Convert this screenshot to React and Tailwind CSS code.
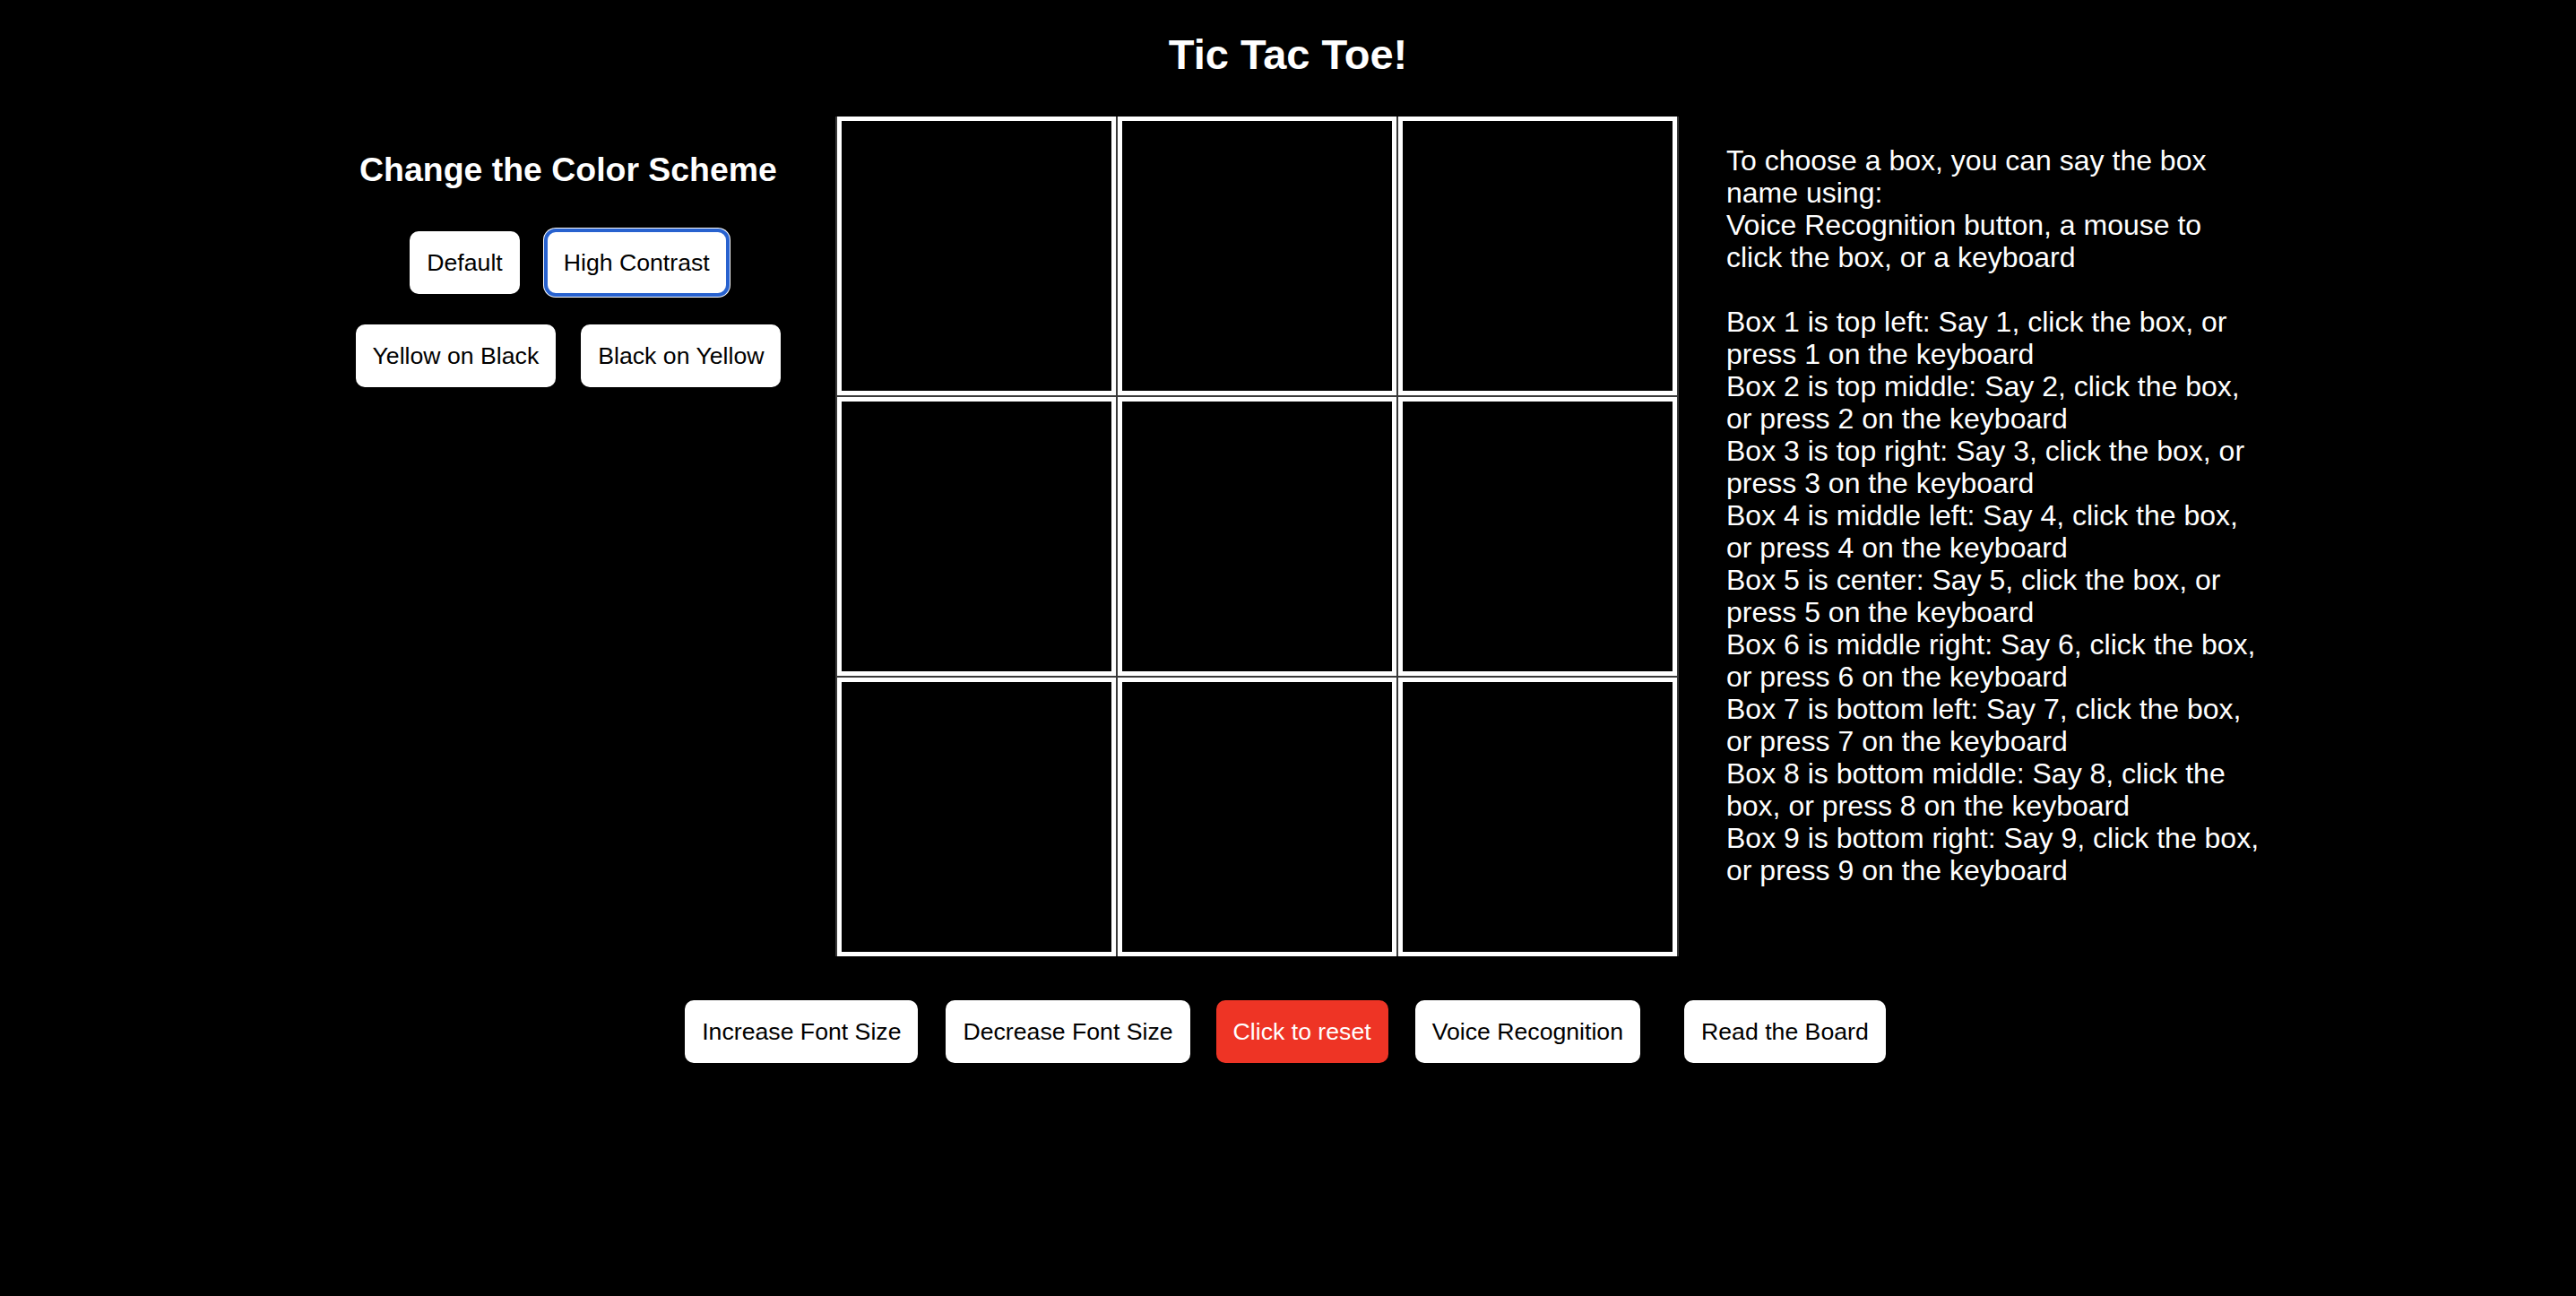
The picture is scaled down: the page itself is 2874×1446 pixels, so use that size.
import { useState } from "react"

const helpLines = [
  "To choose a box, you can say the box",
  "name using:",
  "Voice Recognition button, a mouse to",
  "click the box, or a keyboard",
  "",
  "Box 1 is top left: Say 1, click the box, or",
  "press 1 on the keyboard",
  "Box 2 is top middle: Say 2, click the box,",
  "or press 2 on the keyboard",
  "Box 3 is top right: Say 3, click the box, or",
  "press 3 on the keyboard",
  "Box 4 is middle left: Say 4, click the box,",
  "or press 4 on the keyboard",
  "Box 5 is center: Say 5, click the box, or",
  "press 5 on the keyboard",
  "Box 6 is middle right: Say 6, click the box,",
  "or press 6 on the keyboard",
  "Box 7 is bottom left: Say 7, click the box,",
  "or press 7 on the keyboard",
  "Box 8 is bottom middle: Say 8, click the",
  "box, or press 8 on the keyboard",
  "Box 9 is bottom right: Say 9, click the box,",
  "or press 9 on the keyboard",
]

const btn = "h-[70px] px-[19px] rounded-[10px] bg-white text-black text-[26.67px] leading-[30px] whitespace-nowrap"

const App = () => {
  const [board, setBoard] = useState(Array(9).fill(""))

  const handleClick = (i) => {
    setBoard((prev) => prev.map((v, idx) => (idx === i && !v ? "X" : v)))
  }

  return (
    <div className="min-h-screen w-full bg-black text-white font-['Liberation_Sans',Arial,sans-serif]">
      {/* Title */}
      <h1 className="pt-[38px] text-center text-[47px] leading-[46px] font-bold">Tic Tac Toe!</h1>

      {/* Main row */}
      <div className="mt-[46px] flex items-start pl-[380px]">
        {/* Color scheme */}
        <div className="w-[508px] flex flex-col items-center pt-[37px]">
          <h3 className="text-[37.44px] leading-[44px] font-bold">Change the Color Scheme</h3>
          <div className="mt-[47px] flex gap-[30px]">
            <button className={btn}>Default</button>
            <button className={`${btn} outline-4 outline-[#2862cf] -outline-offset-1 shadow-[0_0_0_4px_#ffffff]`}>
              High Contrast
            </button>
          </div>
          <div className="mt-[34px] flex gap-[28px]">
            <button className={btn}>Yellow on Black</button>
            <button className={btn}>Black on Yellow</button>
          </div>
        </div>

        {/* Board */}
        <div className="ml-[44px] grid grid-cols-3 gap-[2px] px-[2px] bg-[#3a3a3a]">
          {board.map((v, i) => (
            <button
              key={i}
              onClick={() => handleClick(i)}
              className="w-[311px] h-[311px] border-[5px] border-white bg-black text-white text-[120px] font-bold"
            >
              {v}
            </button>
          ))}
        </div>

        {/* Instructions */}
        <div className="ml-[53px] pt-[31px] text-[32px] leading-[36px]">
          {helpLines.map((line, i) => (
            <div key={i} className="whitespace-nowrap h-[36px]">
              {line}
            </div>
          ))}
        </div>
      </div>

      {/* Bottom controls */}
      <div className="mt-[49px] flex justify-center items-center pr-[6px]">
        <button className={btn}>Increase Font Size</button>
        <button className={`${btn} ml-[31px]`}>Decrease Font Size</button>
        <button className={`${btn} ml-[29px] !bg-[#ee3425] !text-white`} onClick={() => setBoard(Array(9).fill(""))}>
          Click to reset
        </button>
        <button className={`${btn} ml-[30px]`}>Voice Recognition</button>
        <button className={`${btn} ml-[49px]`}>Read the Board</button>
      </div>
    </div>
  )
}

export default App
